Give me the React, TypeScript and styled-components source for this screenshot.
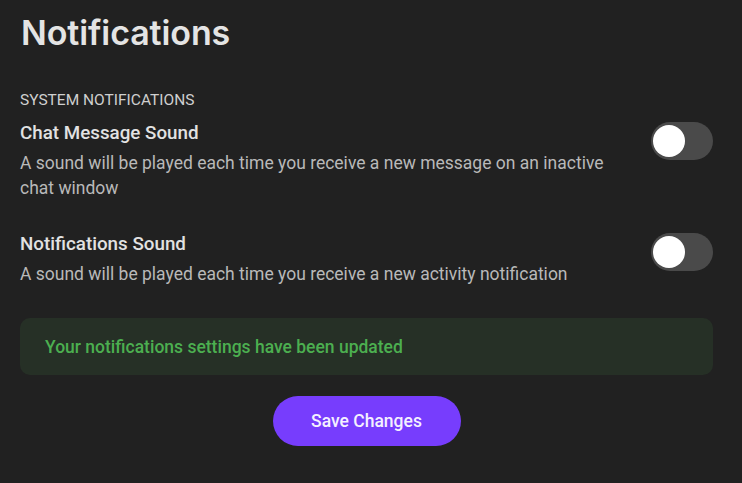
import React, { useState } from 'react'
import styled, { createGlobalStyle } from 'styled-components'

const GlobalStyle = createGlobalStyle`
  html, body {
    margin: 0;
    padding: 0;
    background: #212121;
  }
  body {
    font-family: Roboto, "Liberation Sans", Arial, sans-serif;
    -webkit-font-smoothing: antialiased;
  }
`

const Page = styled.div`
  width: 693px;
  padding: 8px 0 0 20px;
  box-sizing: content-box;
`

const Title = styled.h1`
  margin: 0;
  padding-left: 1px;
  font-family: Inter, "Liberation Sans", sans-serif;
  font-weight: 600;
  font-size: 34px;
  letter-spacing: -0.1px;
  line-height: 50px;
  color: #e4e4e4;
`

const SectionLabel = styled.div`
  margin-top: 33px;
  font-size: 15.5px;
  line-height: 18px;
  color: #cfcfcf;
  text-transform: uppercase;
`

const SettingRow = styled.div<{ $gap: number }>`
  display: flex;
  align-items: flex-start;
  justify-content: space-between;
  margin-top: ${p => p.$gap}px;
`

const SettingText = styled.div`
  max-width: 610px;
`

const SettingName = styled.div`
  font-size: 18.8px;
  font-weight: 500;
  line-height: 24px;
  color: #e2e2e2;
`

const SettingDesc = styled.div`
  margin-top: 6px;
  font-size: 17.5px;
  line-height: 25px;
  color: #b9b9b9;
`

const Track = styled.button<{ $on: boolean }>`
  position: relative;
  flex: none;
  width: 62px;
  height: 38px;
  margin-top: 1px;
  border: 0;
  padding: 0;
  border-radius: 19px;
  background: ${p => (p.$on ? '#773dfd' : '#4a4a4a')};
  cursor: pointer;
`

const Knob = styled.span<{ $on: boolean }>`
  position: absolute;
  top: 3px;
  left: ${p => (p.$on ? '27px' : '2px')};
  width: 32px;
  height: 32px;
  border-radius: 50%;
  background: #fff;
  transition: left 0.15s;
`

const Alert = styled.div`
  margin-top: 31px;
  height: 57px;
  display: flex;
  align-items: center;
  padding: 0 25px;
  border-radius: 10px;
  background: #263026;
  color: #4caf50;
  font-size: 17.5px;
  font-weight: 500;
`

const Actions = styled.div`
  display: flex;
  justify-content: center;
  margin-top: 21px;
`

const SaveButton = styled.button`
  width: 188px;
  height: 50px;
  border: 0;
  border-radius: 25px;
  background: #773dfd;
  color: #f4f0ff;
  font-family: Roboto, "Liberation Sans", sans-serif;
  font-size: 17.5px;
  font-weight: 500;
  cursor: pointer;
`

const Toggle = ({ on, onChange }: { on: boolean; onChange: () => void }) => (
  <Track $on={on} onClick={onChange} aria-pressed={on}>
    <Knob $on={on} />
  </Track>
)

const settings = [
  {
    key: 'chat',
    name: 'Chat Message Sound',
    desc: 'A sound will be played each time you receive a new message on an inactive chat window',
    gap: 12,
  },
  {
    key: 'notif',
    name: 'Notifications Sound',
    desc: 'A sound will be played each time you receive a new activity notification',
    gap: 31,
  },
]

export default function App() {
  const [values, setValues] = useState<Record<string, boolean>>({ chat: false, notif: false })

  return (
    <>
      <GlobalStyle />
      <Page>
        <Title>Notifications</Title>
        <SectionLabel>System Notifications</SectionLabel>
        {settings.map(s => (
          <SettingRow key={s.key} $gap={s.gap}>
            <SettingText>
              <SettingName>{s.name}</SettingName>
              <SettingDesc>{s.desc}</SettingDesc>
            </SettingText>
            <Toggle
              on={values[s.key]}
              onChange={() => setValues(v => ({ ...v, [s.key]: !v[s.key] }))}
            />
          </SettingRow>
        ))}
        <Alert>Your notifications settings have been updated</Alert>
        <Actions>
          <SaveButton>Save Changes</SaveButton>
        </Actions>
      </Page>
    </>
  )
}
